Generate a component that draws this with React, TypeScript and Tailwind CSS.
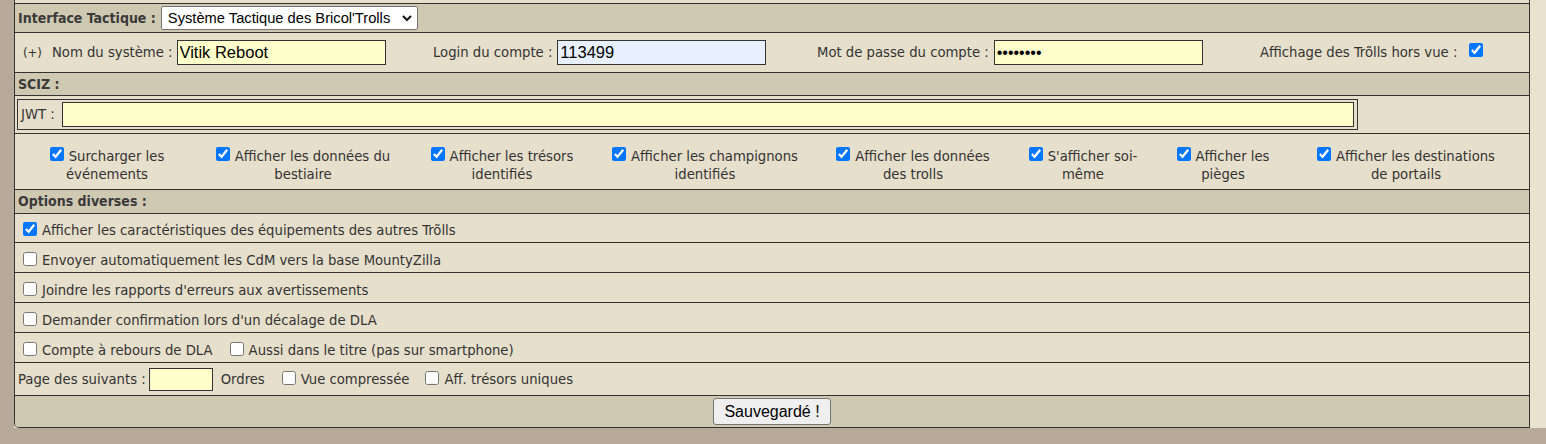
import React from "react";

const FONT = "font-['DejaVu_Sans_Condensed','DejaVu_Sans',sans-serif]";
const ARIAL = "font-['Liberation_Sans',Arial,sans-serif]";

function Cb({ checked = false, className = "" }: { checked?: boolean; className?: string }) {
  return (
    <input
      type="checkbox"
      defaultChecked={checked}
      className={`w-[14px] h-[14px] shrink-0 accent-[#0075ff] ${className}`}
    />
  );
}

const LIGHT = "bg-[#e6dfcb]";
const DARK = "bg-[#d0c9b2]";
const ROW = "border-b border-[#333]";
const OPT = `shrink-0 ${LIGHT} ${ROW} flex items-center pl-[8px] pt-[5px] gap-[5px]`;

const columns: { w: string; l1: string; l2: string }[] = [
  { w: "w-[184px]", l1: "Surcharger les", l2: "événements" },
  { w: "w-[208px]", l1: "Afficher les données du", l2: "bestiaire" },
  { w: "w-[190px]", l1: "Afficher les trésors", l2: "identifiés" },
  { w: "w-[216px]", l1: "Afficher les champignons", l2: "identifiés" },
  { w: "w-[200px]", l1: "Afficher les données", l2: "des trolls" },
  { w: "w-[140px]", l1: "S'afficher soi-", l2: "même" },
  { w: "w-[140px]", l1: "Afficher les", l2: "pièges" },
  { w: "w-[226px]", l1: "Afficher les destinations", l2: "de portails" },
];

export default function App() {
  return (
    <div className={`w-[1546px] h-[444px] bg-[#b8aa9a] flex items-start overflow-hidden ${FONT} text-[14.7px] text-[#333]`}>
      <div className="ml-[14px] flex-1 h-[428px] bg-[#e8e2cf]">
        <div className="w-[1516px] h-[428px] border-l border-r border-b border-[#333] rounded-bl-[5px] flex flex-col overflow-hidden">
          {/* partial top row */}
          <div className={`h-[4px] shrink-0 ${LIGHT} ${ROW}`} />

          {/* Interface Tactique */}
          <div className={`h-[29px] shrink-0 ${DARK} ${ROW} flex items-center pl-[3px]`}>
            <span className="font-bold text-[14px] text-[#3a3a3a]">Interface Tactique :</span>
            <div className="relative ml-[5px]">
              <select
                className={`appearance-none w-[257px] h-[24px] bg-white border border-[#767676] rounded-[2px] pl-[6px] pr-[20px] ${ARIAL} text-[14.7px] text-black`}
                defaultValue="bt"
              >
                <option value="bt">Système Tactique des Bricol'Trolls</option>
              </select>
              <svg
                className="absolute right-[6px] top-[8px] pointer-events-none"
                width="10"
                height="8"
                viewBox="0 0 10 8"
              >
                <path d="M1 2 L5 6 L9 2" fill="none" stroke="#111" strokeWidth="2" />
              </svg>
            </div>
          </div>

          {/* settings */}
          <div className={`h-[40px] shrink-0 ${LIGHT} ${ROW} flex items-center`}>
            <div className="w-[418px] flex items-center pl-[8px]">
              <span className="text-[13px] text-[#333]">(+)</span>
              <span className="ml-[10px]">Nom du système :</span>
              <input
                defaultValue="Vitik Reboot"
                className={`ml-[4px] w-[209px] h-[25px] bg-[#ffffcc] border border-[#333] pl-[2px] ${ARIAL} text-[16.5px] text-black`}
              />
            </div>
            <div className="w-[384px] flex items-center">
              <span>Login du compte :</span>
              <input
                defaultValue="113499"
                className={`ml-[5px] w-[209px] h-[25px] bg-[#e8f0fe] border border-[#333] pl-[2px] ${ARIAL} text-[16.5px] text-black`}
              />
            </div>
            <div className="w-[443px] flex items-center">
              <span>Mot de passe du compte :</span>
              <input
                type="password"
                defaultValue="abcdefgh"
                className={`ml-[5px] w-[209px] h-[25px] bg-[#ffffcc] border border-[#333] pl-[2px] ${ARIAL} text-[16px] text-black`}
              />
            </div>
            <div className="flex items-center">
              <span>Affichage des Trõlls hors vue :</span>
              <Cb checked className="ml-[12px] mb-[5px]" />
            </div>
          </div>

          {/* SCIZ */}
          <div className={`h-[23px] shrink-0 ${DARK} ${ROW} flex items-center pl-[3px]`}>
            <span className="font-bold text-[14px] text-[#3a3a3a]">SCIZ :</span>
          </div>

          {/* JWT */}
          <div className={`h-[38px] shrink-0 ${LIGHT} ${ROW} flex items-center pl-[2px]`}>
            <div className="w-[1341px] h-[31px] border border-[#333] flex items-center pl-[3px] pr-[3px]">
              <span>JWT :</span>
              <input className={`ml-[7px] flex-1 h-[25px] bg-[#ffffcc] border border-[#333] ${ARIAL} text-[16px]`} />
            </div>
          </div>

          {/* checkbox columns */}
          <div className={`h-[56px] shrink-0 ${LIGHT} ${ROW} flex`}>
            {columns.map((c, i) => (
              <div key={i} className={`${c.w} flex items-center justify-center text-center leading-[18px] pt-[6px]`}>
                <div className="whitespace-nowrap">
                  <div className="flex items-center justify-center gap-[5px]">
                    <Cb checked className="mb-[4px]" />
                    <span>{c.l1}</span>
                  </div>
                  <div>{c.l2}</div>
                </div>
              </div>
            ))}
          </div>

          {/* Options diverses */}
          <div className={`h-[24px] shrink-0 ${DARK} ${ROW} flex items-center pl-[3px]`}>
            <span className="font-bold text-[14px] text-[#3a3a3a]">Options diverses :</span>
          </div>

          <div className={`h-[29px] ${OPT}`}>
            <Cb checked className="mb-[3px]" />
            <span>Afficher les caractéristiques des équipements des autres Trõlls</span>
          </div>
          <div className={`h-[30px] ${OPT}`}>
            <Cb className="mb-[3px]" />
            <span>Envoyer automatiquement les CdM vers la base MountyZilla</span>
          </div>
          <div className={`h-[30px] ${OPT}`}>
            <Cb className="mb-[3px]" />
            <span>Joindre les rapports d'erreurs aux avertissements</span>
          </div>
          <div className={`h-[30px] ${OPT}`}>
            <Cb className="mb-[3px]" />
            <span>Demander confirmation lors d'un décalage de DLA</span>
          </div>
          <div className={`h-[30px] ${OPT}`}>
            <Cb className="mb-[3px]" />
            <span>Compte à rebours de DLA</span>
            <Cb className="mb-[3px] ml-[12px]" />
            <span>Aussi dans le titre (pas sur smartphone)</span>
          </div>
          <div className={`h-[33px] shrink-0 ${LIGHT} ${ROW} flex items-center pl-[3px]`}>
            <span>Page des suivants :</span>
            <input className={`ml-[3px] w-[64px] h-[23px] bg-[#ffffcc] border border-[#333] ${ARIAL} text-[14px]`} />
            <span className="ml-[8px]">Ordres</span>
            <Cb className="mb-[3px] ml-[17px]" />
            <span className="ml-[5px]">Vue compressée</span>
            <Cb className="mb-[3px] ml-[16px]" />
            <span className="ml-[5px]">Aff. trésors uniques</span>
          </div>

          {/* save button */}
          <div className={`flex-1 ${DARK} flex items-center justify-center`}>
            <button
              className={`w-[118px] h-[27px] bg-[#efefef] border border-[#767676] rounded-[3px] ${ARIAL} text-[16px] text-black`}
            >
              Sauvegardé !
            </button>
          </div>
        </div>
      </div>
    </div>
  );
}
